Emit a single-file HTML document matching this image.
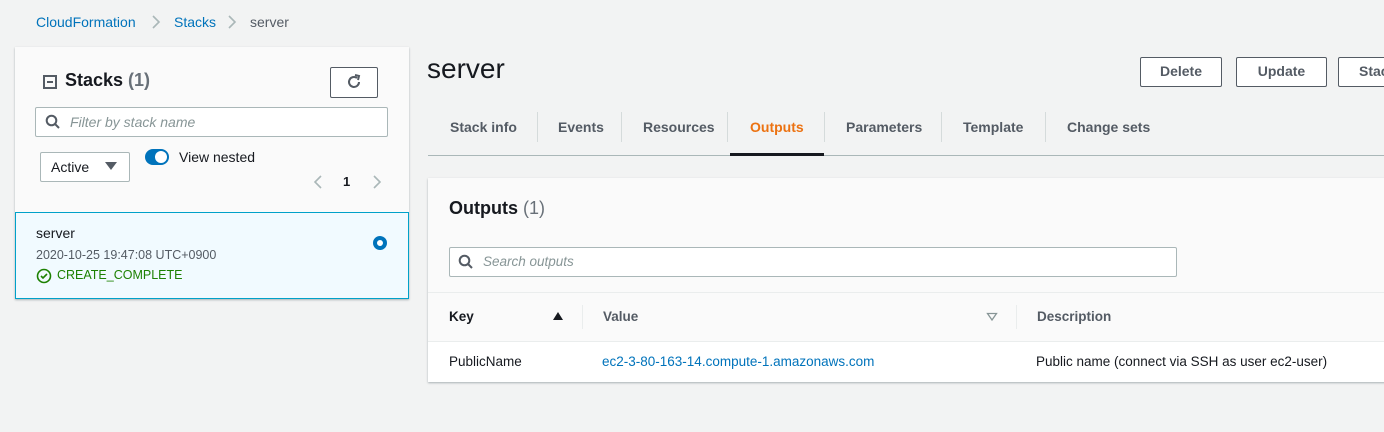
<!DOCTYPE html>
<html><head><style>
*{box-sizing:border-box;margin:0;padding:0}
body{width:1384px;height:432px;background:#f2f3f3;font-family:"Liberation Sans",sans-serif;font-size:14px;color:#16191f;position:relative;overflow:hidden}
.a{position:absolute;white-space:nowrap}
.btn{position:absolute;border:1px solid #545b64;background:#fff;border-radius:2px;font-weight:bold;color:#545b64;font-size:14px;text-align:center;line-height:27px;height:30px;white-space:nowrap;overflow:hidden}
.tab{position:absolute;top:119px;font-weight:bold;color:#545b64;font-size:14px}
.sep{position:absolute;top:112px;width:1px;height:30px;background:#d5dbdb}
.in{position:absolute;background:#fff;border:1px solid #aab7b8;border-radius:2px}
.ph{font-style:italic;color:#879596;font-size:14px}
</style></head><body>
<div class="a" style="left:36px;top:14px;color:#0073bb">CloudFormation</div>
<svg class="a" style="left:151px;top:14px" width="10" height="16"><path d="M2 2l6 6-6 6" stroke="#aab7b8" stroke-width="1.6" fill="none"/></svg>
<div class="a" style="left:174px;top:14px;color:#0073bb">Stacks</div>
<svg class="a" style="left:227px;top:14px" width="10" height="16"><path d="M2 2l6 6-6 6" stroke="#aab7b8" stroke-width="1.6" fill="none"/></svg>
<div class="a" style="left:250px;top:14px;color:#545b64">server</div>

<div class="a" style="left:15px;top:47px;width:394px;height:252px;background:#fafafa;box-shadow:0 1px 2px rgba(0,28,36,.3)"></div>
<svg class="a" style="left:43px;top:75px" width="14" height="14"><rect x="1" y="1" width="12" height="12" fill="none" stroke="#545b64" stroke-width="2"/><path d="M4 7h6" stroke="#545b64" stroke-width="2"/></svg>
<div class="a" style="left:65px;top:70px;font-size:18px;font-weight:bold">Stacks <span style="color:#687078">(1)</span></div>
<div class="btn" style="left:330px;top:67px;width:48px;height:31px"></div>
<svg class="a" style="left:345px;top:73px" width="18" height="18"><path d="M14 9a5 5 0 1 1-2-4" fill="none" stroke="#545b64" stroke-width="2"/><path d="M10 2l4 1-1 4" fill="none" stroke="#545b64" stroke-width="2"/></svg>
<div class="in" style="left:35px;top:107px;width:353px;height:30px"></div>
<svg class="a" style="left:45px;top:114px" width="16" height="16"><circle cx="6.5" cy="6.5" r="4.8" fill="none" stroke="#545b64" stroke-width="2"/><path d="M10 10l4 4" stroke="#545b64" stroke-width="2"/></svg>
<div class="a ph" style="left:70px;top:114px">Filter by stack name</div>
<div class="in" style="left:40px;top:152px;width:90px;height:30px;border-color:#aab7b8"></div>
<div class="a" style="left:51px;top:159px">Active</div>
<svg class="a" style="left:104px;top:161px" width="14" height="10"><path d="M1 1h12l-6 8z" fill="#545b64"/></svg>
<div class="a" style="left:145px;top:149px;width:24px;height:16px;border-radius:8px;background:#0073bb"></div>
<div class="a" style="left:155px;top:151px;width:12px;height:12px;border-radius:6px;background:#fff"></div>
<div class="a" style="left:179px;top:149px">View nested</div>
<svg class="a" style="left:313px;top:174px" width="10" height="16"><path d="M8 2l-6 6 6 6" stroke="#aab7b8" stroke-width="1.6" fill="none"/></svg>
<div class="a" style="left:343px;top:174px;font-weight:bold;font-size:13px">1</div>
<svg class="a" style="left:372px;top:174px" width="10" height="16"><path d="M2 2l6 6-6 6" stroke="#aab7b8" stroke-width="1.6" fill="none"/></svg>
<div class="a" style="left:15px;top:212px;width:394px;height:87px;background:#f1faff;border:1px solid #00a1c9"></div>
<div class="a" style="left:36px;top:225px">server</div>
<div class="a" style="left:36px;top:248px;font-size:12.5px;color:#545b64">2020-10-25 19:47:08 UTC+0900</div>
<svg class="a" style="left:36px;top:268px" width="16" height="16"><circle cx="8" cy="8" r="6.5" fill="none" stroke="#1d8102" stroke-width="1.6"/><path d="M5 8l2 2 4-4" fill="none" stroke="#1d8102" stroke-width="1.6"/></svg>
<div class="a" style="left:57px;top:268px;font-size:12.5px;color:#1d8102">CREATE_COMPLETE</div>
<div class="a" style="left:373px;top:236px;width:14px;height:14px;border-radius:7px;border:4px solid #0073bb;background:#fff"></div>

<div class="a" style="left:427px;top:53px;font-size:28px">server</div>
<div class="btn" style="left:1140px;top:57px;width:82px">Delete</div>
<div class="btn" style="left:1236px;top:57px;width:91px">Update</div>
<div class="btn" style="left:1338px;top:57px;width:80px;text-align:left;padding-left:20px">Stack actions</div>
<div class="tab" style="left:450px">Stack info</div>
<div class="sep" style="left:537px"></div>
<div class="tab" style="left:558px">Events</div>
<div class="sep" style="left:621px"></div>
<div class="tab" style="left:643px">Resources</div>
<div class="sep" style="left:727px"></div>
<div class="tab" style="left:750px;color:#ec7211">Outputs</div>
<div class="sep" style="left:824px"></div>
<div class="tab" style="left:846px">Parameters</div>
<div class="sep" style="left:941px"></div>
<div class="tab" style="left:963px">Template</div>
<div class="sep" style="left:1045px"></div>
<div class="tab" style="left:1067px">Change sets</div>
<div class="a" style="left:428px;top:155px;width:956px;height:1px;background:#aab7b8"></div>
<div class="a" style="left:730px;top:153px;width:94px;height:3px;background:#16191f"></div>

<div class="a" style="left:428px;top:178px;width:970px;height:204px;background:#fafafa;box-shadow:0 1px 2px rgba(0,28,36,.3)"></div>
<div class="a" style="left:449px;top:198px;font-size:18px;font-weight:bold">Outputs <span style="color:#687078;font-weight:normal">(1)</span></div>
<div class="in" style="left:449px;top:247px;width:728px;height:30px"></div>
<svg class="a" style="left:458px;top:254px" width="16" height="16"><circle cx="6.5" cy="6.5" r="4.8" fill="none" stroke="#545b64" stroke-width="2"/><path d="M10 10l4 4" stroke="#545b64" stroke-width="2"/></svg>
<div class="a ph" style="left:483px;top:254px;font-size:13.5px">Search outputs</div>
<div class="a" style="left:428px;top:292px;width:956px;height:1px;background:#eaeded"></div>
<div class="a" style="left:428px;top:341px;width:956px;height:41px;background:#fff;border-top:1px solid #eaeded"></div>
<div class="a" style="left:449px;top:309px;font-weight:bold;font-size:13.5px">Key</div>
<svg class="a" style="left:552px;top:311px" width="12" height="10"><path d="M1 9h10L6 1z" fill="#16191f"/></svg>
<div class="a" style="left:582px;top:305px;width:1px;height:24px;background:#eaeded"></div>
<div class="a" style="left:603px;top:309px;font-weight:bold;font-size:13.5px;color:#545b64">Value</div>
<svg class="a" style="left:986px;top:312px" width="12" height="9"><path d="M1.5 1.5h9L6 8z" fill="none" stroke="#879596" stroke-width="1.3"/></svg>
<div class="a" style="left:1016px;top:305px;width:1px;height:24px;background:#eaeded"></div>
<div class="a" style="left:1037px;top:309px;font-weight:bold;font-size:13.5px;color:#545b64">Description</div>
<div class="a" style="left:449px;top:354px;font-size:13.5px">PublicName</div>
<div class="a" style="left:602px;top:354px;font-size:13.5px;color:#0073bb">ec2-3-80-163-14.compute-1.amazonaws.com</div>
<div class="a" style="left:1036px;top:354px;font-size:13.5px">Public name (connect via SSH as user ec2-user)</div>
</body></html>
